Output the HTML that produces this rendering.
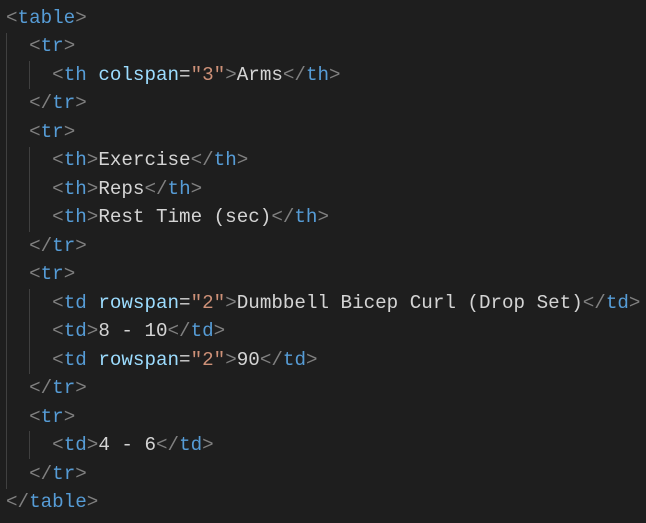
<!DOCTYPE html>
<html><head><style>
body{margin:0;background:#1e1e1e;width:646px;height:523px;overflow:hidden}
pre{margin:0;position:absolute;left:6px;top:4px;font-family:"Liberation Mono",monospace;font-size:19.23px;line-height:28.47px;color:#d4d4d4}
.b{color:#808080}.t{color:#569cd6}.a{color:#9cdcfe}.s{color:#ce9178}
.g{position:absolute;width:1px;background:#404040}
</style></head><body>
<div class="g" style="left:6px;top:33px;height:456px"></div>
<div class="g" style="left:29px;top:61px;height:28px"></div>
<div class="g" style="left:29px;top:147px;height:85px"></div>
<div class="g" style="left:29px;top:289px;height:85px"></div>
<div class="g" style="left:29px;top:431px;height:28px"></div>
<pre><span class="b">&lt;</span><span class="t">table</span><span class="b">&gt;</span>
  <span class="b">&lt;</span><span class="t">tr</span><span class="b">&gt;</span>
    <span class="b">&lt;</span><span class="t">th</span> <span class="a">colspan</span>=<span class="s">"3"</span><span class="b">&gt;</span>Arms<span class="b">&lt;/</span><span class="t">th</span><span class="b">&gt;</span>
  <span class="b">&lt;/</span><span class="t">tr</span><span class="b">&gt;</span>
  <span class="b">&lt;</span><span class="t">tr</span><span class="b">&gt;</span>
    <span class="b">&lt;</span><span class="t">th</span><span class="b">&gt;</span>Exercise<span class="b">&lt;/</span><span class="t">th</span><span class="b">&gt;</span>
    <span class="b">&lt;</span><span class="t">th</span><span class="b">&gt;</span>Reps<span class="b">&lt;/</span><span class="t">th</span><span class="b">&gt;</span>
    <span class="b">&lt;</span><span class="t">th</span><span class="b">&gt;</span>Rest Time (sec)<span class="b">&lt;/</span><span class="t">th</span><span class="b">&gt;</span>
  <span class="b">&lt;/</span><span class="t">tr</span><span class="b">&gt;</span>
  <span class="b">&lt;</span><span class="t">tr</span><span class="b">&gt;</span>
    <span class="b">&lt;</span><span class="t">td</span> <span class="a">rowspan</span>=<span class="s">"2"</span><span class="b">&gt;</span>Dumbbell Bicep Curl (Drop Set)<span class="b">&lt;/</span><span class="t">td</span><span class="b">&gt;</span>
    <span class="b">&lt;</span><span class="t">td</span><span class="b">&gt;</span>8 - 10<span class="b">&lt;/</span><span class="t">td</span><span class="b">&gt;</span>
    <span class="b">&lt;</span><span class="t">td</span> <span class="a">rowspan</span>=<span class="s">"2"</span><span class="b">&gt;</span>90<span class="b">&lt;/</span><span class="t">td</span><span class="b">&gt;</span>
  <span class="b">&lt;/</span><span class="t">tr</span><span class="b">&gt;</span>
  <span class="b">&lt;</span><span class="t">tr</span><span class="b">&gt;</span>
    <span class="b">&lt;</span><span class="t">td</span><span class="b">&gt;</span>4 - 6<span class="b">&lt;/</span><span class="t">td</span><span class="b">&gt;</span>
  <span class="b">&lt;/</span><span class="t">tr</span><span class="b">&gt;</span>
<span class="b">&lt;/</span><span class="t">table</span><span class="b">&gt;</span></pre>
</body></html>
